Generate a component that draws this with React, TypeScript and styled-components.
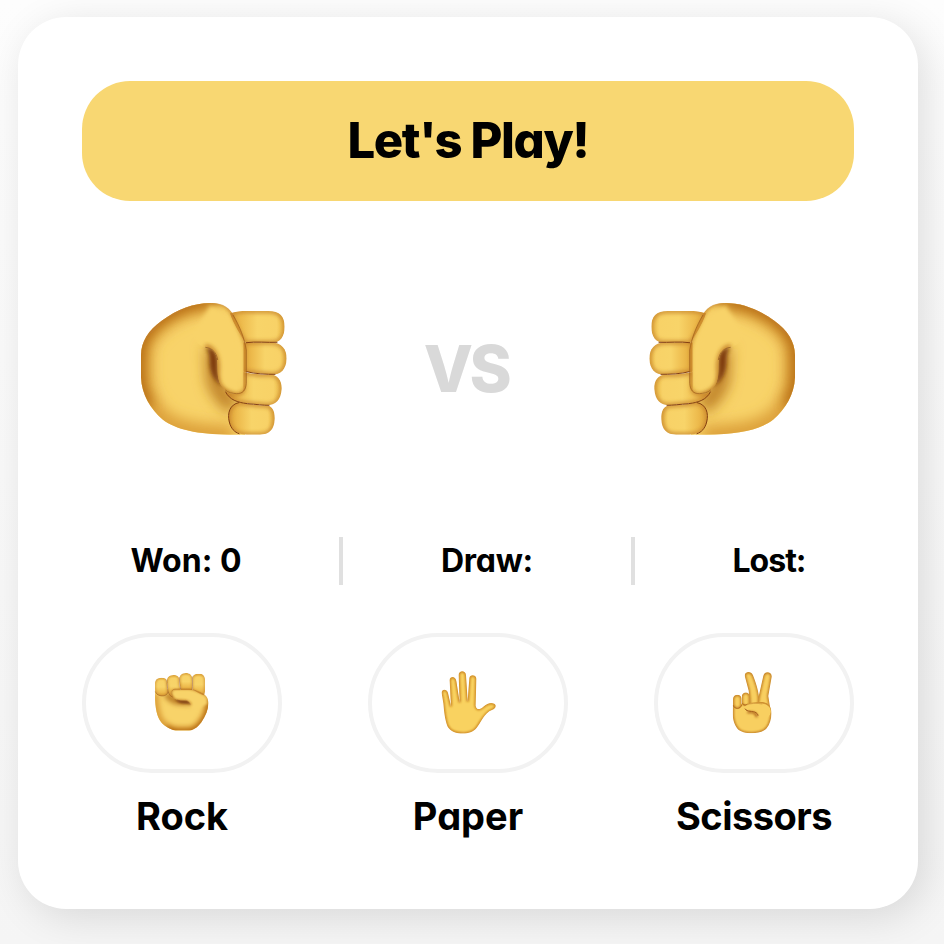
import React, { useId } from "react";
import styled, { createGlobalStyle } from "styled-components";

const GlobalStyle = createGlobalStyle`
  * { box-sizing: border-box; }
  body {
    margin: 0;
    font-family: Inter, "Open Sans", sans-serif;
    font-feature-settings: "cv11";
    color: #000;
  }
`;

const Page = styled.main`
  width: 944px;
  height: 944px;
  padding: 17px 26px 35px 18px;
  overflow: hidden;
  background: linear-gradient(#fdfdfd, #f5f5f5);
`;

const Card = styled.section`
  height: 892px;
  padding: 64px;
  border-radius: 48px;
  background: #fff;
  box-shadow: 8px 8px 40px rgba(0, 0, 0, 0.12);
`;

const Banner = styled.h1`
  display: flex;
  align-items: center;
  justify-content: center;
  height: 120px;
  margin: 0;
  border-radius: 48px;
  background: #f8d772;
`;

const Label = styled.span<{ $size: number; $width: number; $weight?: number; $spacing?: number; $color?: string }>`
  display: flex;
  justify-content: center;
  width: ${(p) => p.$width}px;
  font-size: ${(p) => p.$size}px;
  line-height: 1.2;
  font-weight: ${(p) => p.$weight ?? 670};
  letter-spacing: ${(p) => p.$spacing ?? 0}px;
  color: ${(p) => p.$color ?? "inherit"};
  white-space: nowrap;
`;

const Arena = styled.div`
  display: flex;
  align-items: center;
  justify-content: space-between;
  height: 136px;
  margin: 99px 56px 0;
`;

const Versus = styled.div`
  padding: 3px 4px 0 0;
`;

const Scores = styled.div`
  display: flex;
  align-items: center;
  justify-content: space-around;
  height: 48px;
  margin-top: 101px;
`;

const Divider = styled.i`
  width: 4px;
  height: 48px;
  background: #e0e0e0;
`;

const Choices = styled.div`
  display: flex;
  justify-content: space-between;
  margin-top: 48px;
`;

const Choice = styled.div`
  display: flex;
  flex-direction: column;
  align-items: center;
  gap: 21px;
  width: 200px;
`;

const ChoiceButton = styled.button`
  display: flex;
  align-items: center;
  justify-content: center;
  width: 200px;
  height: 140px;
  padding: 0;
  border: 4px solid #f2f2f2;
  border-radius: 70px;
  background: #fff;
`;

const BigFist = styled.svg<{ $flip?: boolean }>`
  width: 150px;
  height: 136px;
  transform: ${(p) => (p.$flip ? "scaleX(-1)" : "none")};
`;

const SmallIcon = styled.svg`
  width: 80px;
  height: 85px;
`;

const FIST_BODY =
  "M240 39C193 39 142 58 95 92C55 121 33 155 33 195V262C35 315 62 357 97 388C137 420 205 433 298 434H345V270L349 180C344 147 334 126 316 86C303 56 279 39 240 39Z";
const FINGERS = [
  "M300 70C320 63 340 62 365 63H415C450 63 464 80 464 110C464 141 450 158 425 158H345C335 138 310 104 300 70Z",
  "M340 157H422C455 158 470 177 470 206C469 237 453 254 425 254L340 245Z",
  "M286 305C315 319 345 312 340 290V246C370 252 400 255 418 253C445 254 456 273 455 297C453 330 437 346 410 346C385 343 344 342 318 333C302 326 290 319 286 305Z",
  "M327 337C358 344 385 345 407 346C428 347 435 364 434 388C433 419 417 434 390 434H350C314 434 297 413 295 385C295 359 305 342 327 337Z",
];
const FIST_THUMB =
  "M225 171C200 165 180 145 190 112C200 75 222 40 248 39C279 39 302 54 315 84C334 126 344 146 349 180L349 280C348 300 339 312 320 311C300 311 276 297 268 276C258 249 267 219 259 198C252 181 241 172 225 171Z";

function FistArt() {
  const id = useId().replace(/[^a-zA-Z0-9]/g, "");
  return (
    <>
      <defs>
        <filter id={`${id}b`} filterUnits="userSpaceOnUse" x="-60" y="-60" width="620" height="600"><feGaussianBlur stdDeviation="20" /></filter>
        <filter id={`${id}s`} filterUnits="userSpaceOnUse" x="-60" y="-60" width="620" height="600"><feGaussianBlur stdDeviation="7" /></filter>
        <linearGradient id={`${id}f`}>
          <stop offset="0" stopColor="#dfa43a" />
          <stop offset=".2" stopColor="#edba4c" />
          <stop offset=".5" stopColor="#f8d469" />
          <stop offset=".85" stopColor="#f8d267" />
          <stop offset="1" stopColor="#edbd4a" />
        </linearGradient>
        <clipPath id={`${id}c`}><path d={FIST_BODY} /></clipPath>
        <clipPath id={`${id}t`}><path d={FIST_THUMB} /></clipPath>
        {FINGERS.map((d, i) => <clipPath key={i} id={`${id}${i}`}><path d={d} /></clipPath>)}
      </defs>
      <path d={FIST_BODY} fill="#f8d369" />
      <g clipPath={`url(#${id}c)`}>
        <path d="M310 442C190 440 137 425 93 394C56 360 32 315 29 262V195C29 153 53 117 92 87C142 52 193 33 240 34" fill="none" stroke="#dda13b" strokeWidth="72" filter={`url(#${id}b)`} />
        <path d="M54 350C36 325 25 300 25 262V195C25 150 50 113 92 83C142 48 193 29 260 30" fill="none" stroke="#a4540e" strokeWidth="30" filter={`url(#${id}b)`} />
        <path d="M218 178C244 171 269 194 267 224C266 272 294 305 325 330L300 370C250 332 226 291 228 235C230 208 228 192 218 178Z" fill="#ba7a24" filter={`url(#${id}b)`} />
        <path d="M226 173C252 171 263 188 263 218C261 258 268 276 282 292C248 275 237 242 238 205C237 190 233 178 226 173Z" fill="#7d3b10" filter={`url(#${id}s)`} />
      </g>
      {FINGERS.map((d, i) => (
        <g key={i} clipPath={`url(#${id}${i})`}>
          <path d={d} fill={`url(#${id}f)`} />
          <path d={d} fill="none" stroke="#c58129" strokeWidth="10" filter={`url(#${id}s)`} />
        </g>
      ))}
      <g fill="none" stroke="#844011" strokeWidth="3" strokeLinecap="round">
        <path d="M349 158C378 154 410 158 441 157" />
        <path d="M350 245C374 252 411 253 435 253" />
        <path d="M287 306C299 330 322 337 352 341C378 343 400 346 417 346" />
        <path d="M326 338C300 343 291 369 298 396C303 416 314 427 327 431" />
      </g>
      <g clipPath={`url(#${id}t)`}>
        <path d="M246 59C286 75 306 120 315 180L320 300L275 280L263 204C252 181 241 172 225 171L195 140Z" fill="#f8d369" stroke="#f8d369" strokeWidth="20" filter={`url(#${id}s)`} />
        <path d="M240 36C256 33 270 37 278 40C302 50 312 74 325 102C343 142 351 157 352 185V283C350 312 327 321 304 313C273 306 259 277 263 240C266 198 250 170 225 169" fill="none" stroke="#c07922" strokeWidth="11" filter={`url(#${id}s)`} />
      </g>
      <path d="M309 75C330 110 343 145 349 180V280C347 301 339 311 320 311C306 310 295 308 286 300" fill="none" stroke="#9b5918" strokeWidth="2" />
      <path d="M226 172C248 173 260 190 263 210" fill="none" stroke="#8d511d" strokeWidth="2" />
    </>
  );
}

const HAND =
  "M35 97C33 83 51 82 54 96L63 136L59 60C57 45 77 44 79 60L89 124L86 42C86 27 107 27 108 42L113 121L118 52C118 39 140 40 139 54L137 134C139 147 149 147 159 138C172 126 183 124 193 128C200 132 198 143 186 147C163 155 153 185 139 202C121 225 67 222 53 197C44 177 42 148 40 127Z";

function HandArt() {
  return (
    <>
      <defs>
        <filter id="handSoft"><feGaussianBlur stdDeviation="2.5" /></filter>
        <clipPath id="handClip"><path d={HAND} /></clipPath>
      </defs>
      <g clipPath="url(#handClip)">
        <path d={HAND} fill="#f9d260" />
        <path d={HAND} fill="none" stroke="#c87f1c" strokeWidth="7" filter="url(#handSoft)" />
      </g>
    </>
  );
}

const V_PARTS = [
  "M90 48C84 33 107 26 114 43C122 62 130 89 132 107L132 139L105 135L101 89Z",
  "M145 44C149 28 172 32 170 48L160 105L167 151L127 133L132 102Z",
  "M54 128C53 159 50 181 68 204C83 221 139 222 155 202C167 187 172 161 168 145C165 128 151 122 130 123L84 128Z",
  "M54 115C53 98 79 96 80 113V131C80 147 55 147 54 130Z",
  "M80 108C80 90 105 90 105 108V126C105 141 82 140 80 124Z",
  "M94 132C104 124 133 124 152 130C167 137 171 149 165 161C156 179 131 176 125 164C121 153 100 157 91 146C87 141 89 135 94 132Z",
];

function VictoryArt() {
  return (
    <>
      <defs>
        <filter id="victorySoft" filterUnits="userSpaceOnUse" x="0" y="0" width="240" height="255"><feGaussianBlur stdDeviation="2.5" /></filter>
        {V_PARTS.map((d, i) => <clipPath key={i} id={`victory${i}`}><path d={d} /></clipPath>)}
      </defs>
      {V_PARTS.map((d, i) => (
        <g key={i} clipPath={`url(#victory${i})`}>
          <path d={d} fill="#f8cf60" />
          {i < 5 && <path d={d} fill="none" stroke="#bc741c" strokeWidth="7" filter="url(#victorySoft)" />}
        </g>
      ))}
      <path d="M90 143C96 154 113 149 123 155Q130 160 129 164" fill="none" stroke="#985014" strokeWidth="3" />
      <path d="M91 133C106 126 126 126 142 129" fill="none" stroke="#cc8f37" strokeWidth="2" />
      <path d="M97 154C113 152 127 156 124 169" fill="none" stroke="#b66d20" strokeWidth="7" filter="url(#victorySoft)" />
      <path d="M55 133C58 146 76 146 80 132M82 127C87 133 93 133 97 129" fill="none" stroke="#a35812" strokeWidth="2" />
    </>
  );
}

export default function App() {
  return (
    <>
      <GlobalStyle />
      <Page>
        <Card>
          <Banner><Label $size={49} $width={243} $weight={850} $spacing={-1.4}>Let's Play!</Label></Banner>
          <Arena>
            <BigFist viewBox="24 30 450 408"><FistArt /></BigFist>
            <Versus><Label $size={64} $width={90} $weight={850} $spacing={-3.5} $color="#d9d9d9">VS</Label></Versus>
            <BigFist $flip viewBox="24 30 450 408"><FistArt /></BigFist>
          </Arena>
          <Scores>
            <Label $size={32} $width={110}>Won: 0</Label>
            <Divider />
            <Label $size={32} $width={92} $spacing={-0.3}>Draw:</Label>
            <Divider />
            <Label $size={32} $width={72} $spacing={-1}>Lost:</Label>
          </Scores>
          <Choices>
            <Choice>
              <ChoiceButton aria-label="Choose rock">
                <SmallIcon viewBox="0 0 240 255">
                  <g transform="matrix(0 -.395 -.405 0 214.8 221.7)"><FistArt /></g>
                </SmallIcon>
              </ChoiceButton>
              <Label $size={38} $width={200}>Rock</Label>
            </Choice>
            <Choice>
              <ChoiceButton aria-label="Choose paper"><SmallIcon viewBox="-6 0 240 255"><HandArt /></SmallIcon></ChoiceButton>
              <Label $size={38} $width={200}>Paper</Label>
            </Choice>
            <Choice>
              <ChoiceButton aria-label="Choose scissors"><SmallIcon viewBox="-3 0 240 255"><VictoryArt /></SmallIcon></ChoiceButton>
              <Label $size={38} $width={200} $spacing={-0.5}>Scissors</Label>
            </Choice>
          </Choices>
        </Card>
      </Page>
    </>
  );
}
